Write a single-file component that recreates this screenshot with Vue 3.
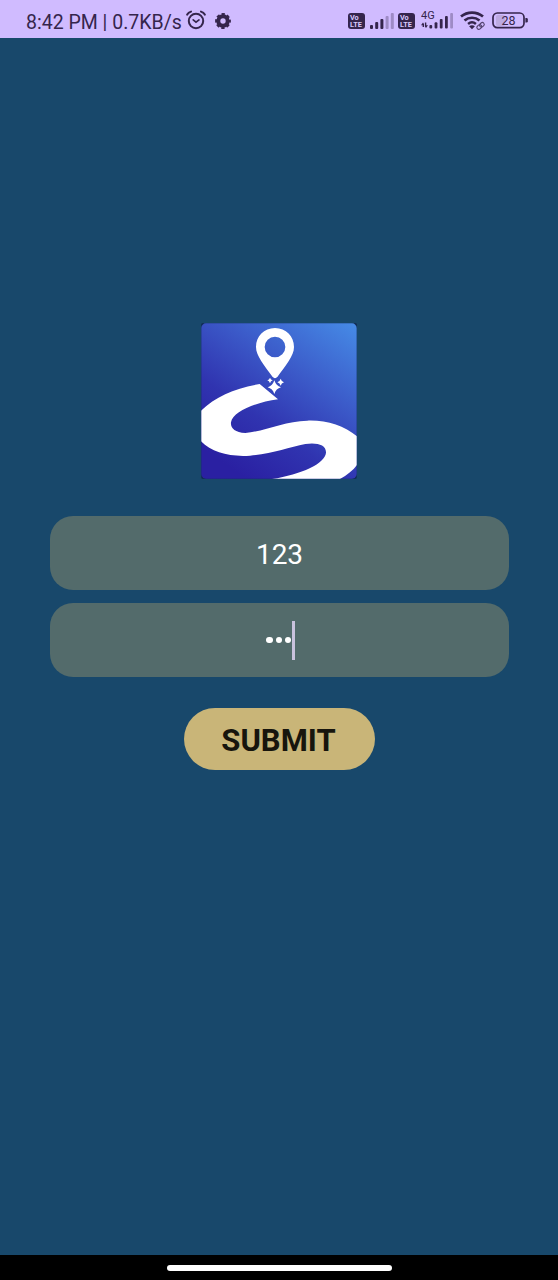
<script setup>
import { ref } from 'vue'

const username = ref('123')
const passwordLength = ref(3)
</script>

<template>
  <main class="screen">
    <header class="status">
      <span class="clock">8:42 PM | 0.7KB/s</span>
      <svg class="alarm" width="20" height="20" viewBox="0 0 20 20" fill="none" stroke="currentColor" stroke-linecap="round">
        <circle cx="10" cy="11" r="7.2" stroke-width="2" />
        <path d="M1.2 4.6Q2.4 2.4 5 1.6M18.8 4.6Q17.6 2.4 15 1.6" stroke-width="2" />
        <path d="m7.2 9.8 2.8 2.4 3-2.3" stroke-width="1.7" />
      </svg>
      <svg class="gear" width="16" height="16" viewBox="0 0 16 16" fill="none" stroke="currentColor">
        <circle cx="8" cy="8" r="4.7" stroke-width="4" />
        <circle cx="8" cy="8" r="6.7" stroke-width="2.4" stroke-dasharray="3.2 2.06" stroke-dashoffset="1.6" />
      </svg>
      <span class="spacer"></span>
      <span class="volte"><span>Vo</span><span>LTE</span></span>
      <svg class="signal" width="24" height="16" viewBox="0 0 24 16" fill="currentColor">
        <rect x="0" y="12" width="3" height="4" rx="1" />
        <rect x="5.2" y="9" width="3" height="7" rx="1" />
        <rect x="10.4" y="6" width="3" height="10" rx="1" />
        <rect x="15.6" y="3" width="3" height="13" rx="1" opacity=".32" />
        <rect x="20.8" y="0" width="3" height="16" rx="1" opacity=".32" />
      </svg>
      <span class="volte second"><span>Vo</span><span>LTE</span></span>
      <svg class="mobile" width="33" height="20" viewBox="0 0 33 20" fill="currentColor">
        <text x="0" y="9.3" class="network">4G</text>
        <path d="M0 15.2 2 12.6 3 13.9V17H1.6v-1.8ZM7 15.2 5 18l-1.1-1.4v-4h1.4v2.6Z" />
        <rect x="8.4" y="15" width="2.8" height="3.5" rx="1" />
        <rect x="13.6" y="12.2" width="2.8" height="6.3" rx="1" />
        <rect x="18.8" y="9" width="2.8" height="9.5" rx="1" />
        <rect x="24" y="6" width="2.8" height="12.5" rx="1" />
        <rect x="29.2" y="3" width="2.8" height="15.5" rx="1" opacity=".32" />
      </svg>
      <svg class="wifi" width="26" height="20" viewBox="0 0 26 20" fill="none" stroke="currentColor">
        <path d="M1 6.6C7.3 1.2 16.7 1.2 23 6.6" stroke-width="2.7" />
        <path d="M4.5 10.5c4.4-3.7 10.6-3.7 15 0" stroke-width="2.7" />
        <path d="M8.1 14c2.3-2 5.5-2 7.8 0" stroke-width="2.5" />
        <path d="m9.1 16.2 2.9 3 2.9-3c-1.6-1.4-4.2-1.4-5.8 0Z" fill="currentColor" stroke="none" />
        <g stroke-width="1.1" opacity=".8" transform="rotate(-40 20.5 16)">
          <rect x="16.4" y="14.1" width="5" height="3.8" rx="1.9" />
          <rect x="19.8" y="14.1" width="5" height="3.8" rx="1.9" />
        </g>
      </svg>
      <svg class="battery" width="37" height="17" viewBox="0 0 37 17">
        <rect x="4" y="3" width="9" height="11" rx="2" fill="#bdaae1" />
        <rect x="1" y="1" width="31" height="14.6" rx="4.3" fill="none" stroke="currentColor" stroke-width="1.7" />
        <path d="M33.4 6h1.1q1.3 0 1.3 1.3v2q0 1.3-1.3 1.3h-1.1Z" fill="currentColor" />
        <text x="16.5" y="12.6" text-anchor="middle" class="charge">28</text>
      </svg>
    </header>

    <section class="login">
      <svg class="logo" width="156" height="156" viewBox="18 18 468 468">
        <defs>
          <linearGradient id="sky" x1="0.22" y1="0.95" x2="0.92" y2="-0.05">
            <stop offset="0" stop-color="#2a20a2" />
            <stop offset=".3" stop-color="#3034b0" />
            <stop offset=".6" stop-color="#3b59c8" />
            <stop offset="1" stop-color="#468be6" />
          </linearGradient>
          <clipPath id="tile"><rect x="19" y="19" width="466" height="466" rx="14" /></clipPath>
        </defs>
        <rect x="19" y="19" width="466" height="466" rx="3" fill="#102752" />
        <g clip-path="url(#tile)">
          <rect x="18" y="18" width="468" height="468" fill="url(#sky)" />
          <path fill="#fff" d="M194 201C121 213 62 238 18 281V373C51 407 104 420 165 416C231 411 282 390 331 381C366 376 394 383 393 407C390 440 320 472 231 486H435C456 474 474 461 486 444V358C447 326 394 309 337 311C268 313 211 342 151 348C119 346 106 332 108 316C114 284 179 257 249 247Z" />
          <path fill="#fff" fill-rule="evenodd" d="M240 33C207 33 183 58 183 90C183 117 208 145 233 180Q240 187 247 180C272 145 297 117 297 90C297 58 273 33 240 33ZM240 59A31 31 0 1 1 240 121A31 31 0 1 1 240 59Z" />
          <path fill="#fff" d="M238 190Q243 206 258 211Q243 215 238 231Q233 215 218 211Q233 206 238 190ZM225 182Q227 188 233 190Q227 192 225 199Q223 192 217 190Q223 188 225 182ZM257 185Q259 193 267 196Q259 198 257 206Q255 198 247 196Q255 193 257 185Z" />
        </g>
      </svg>

      <div class="field username">{{ username }}</div>
      <div class="field password">
        <span v-for="n in passwordLength" :key="n" class="dot"></span>
        <span class="caret"></span>
      </div>
      <button class="submit" type="button">SUBMIT</button>
    </section>

    <footer class="navigation"><span class="handle"></span></footer>
  </main>
</template>

<style>
body {
  margin: 0;
  background: #18486b;
}
</style>

<style scoped>
.screen {
  display: flex;
  flex-direction: column;
  height: 1280px;
  background: #18486b;
  font-family: Roboto, sans-serif;
}
.status {
  box-sizing: border-box;
  display: flex;
  align-items: flex-start;
  height: 38px;
  padding: 0 29px 0 26px;
  background: #d0bbff;
  color: #35254c;
}
.status svg {
  flex: none;
}
.clock {
  width: 156px;
  margin-top: 11px;
  font-size: 19.5px;
  line-height: 24px;
  white-space: nowrap;
}
.alarm {
  margin: 10px 0 0 4px;
}
.gear {
  margin: 13px 0 0 9px;
}
.spacer {
  flex: 1;
}
.volte {
  box-sizing: border-box;
  display: flex;
  flex-direction: column;
  width: 17px;
  height: 16px;
  margin-top: 13px;
  padding: 1px 0 0 2px;
  border-radius: 3px;
  background: #35254c;
  color: #d9c9fb;
  font-size: 7.3px;
  font-weight: 700;
  line-height: 7px;
}
.signal {
  margin: 13px 0 0 5px;
}
.second {
  margin-left: 4px;
}
.mobile {
  margin: 10px 0 0 6px;
}
.network {
  font: 11px Roboto, sans-serif;
}
.wifi {
  margin: 10px 0 0 6px;
}
.battery {
  margin: 12px 0 0 6px;
}
.charge {
  font: 400 12.5px Roboto, sans-serif;
  fill: #35254c;
}
.login {
  flex: 1;
  display: flex;
  flex-direction: column;
  align-items: center;
  padding: 285px 49.5px 0;
}
.logo {
  display: block;
  margin-bottom: 37px;
}
.field {
  box-sizing: border-box;
  display: flex;
  align-items: center;
  justify-content: center;
  width: 459px;
  height: 74px;
  border-radius: 23px;
  background: #536b6b;
  color: #fff;
  font-size: 28px;
  line-height: 34px;
}
.username {
  padding: 3px 0 0 1px;
}
.password {
  margin-top: 13px;
  padding-left: 3px;
}
.dot {
  width: 6.4px;
  height: 6.4px;
  margin-right: 3px;
  border-radius: 50%;
  background: #fff;
}
.caret {
  width: 3px;
  height: 39px;
  margin-left: -2.5px;
  background: #c9c2dd;
}
.submit {
  width: 191px;
  height: 62px;
  margin: 31px 0 0 1px;
  padding: 3px 2px 0 0;
  border: 0;
  border-radius: 31px;
  background: #c9b578;
  color: #17150d;
  font: 700 31px/36px Roboto, sans-serif;
}
.navigation {
  display: flex;
  justify-content: center;
  height: 25px;
  background: #000;
}
.handle {
  width: 225px;
  height: 6px;
  margin-top: 9.5px;
  border-radius: 3px;
  background: #fff;
}
</style>
